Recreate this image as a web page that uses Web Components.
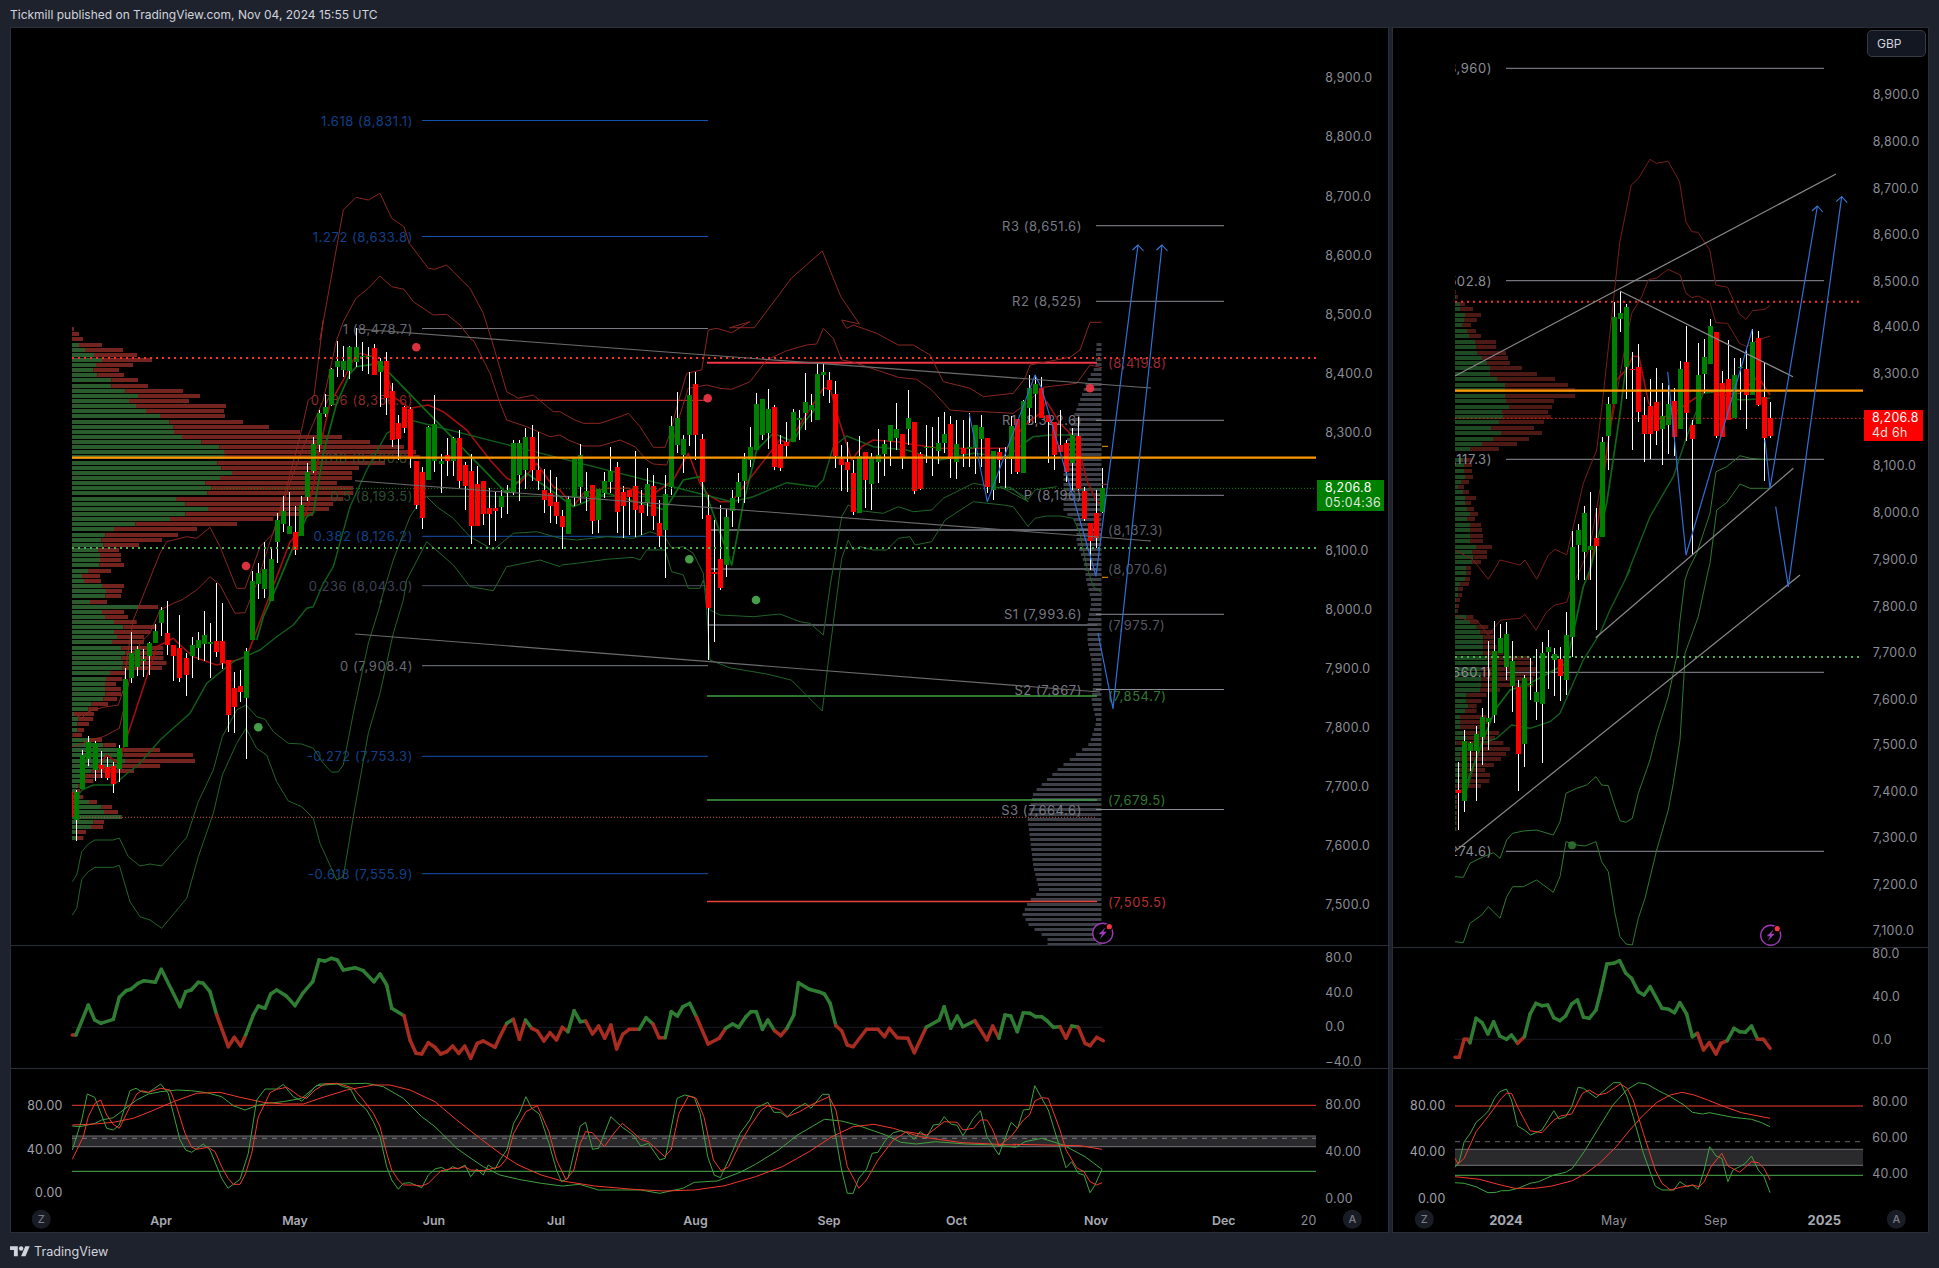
<![CDATA[<!DOCTYPE html>
<html lang="en"><head><meta charset="utf-8"><title>Tickmill chart</title>
<style>
html,body{margin:0;padding:0;background:#1e222d;}
body{width:1939px;height:1268px;overflow:hidden;display:flex;flex-direction:column;font-family:Inter,"Liberation Sans",sans-serif;}
</style></head><body>
<tv-header>Tickmill published on TradingView.com, Nov 04, 2024 15:55 UTC</tv-header>
<tv-workspace>
  <tv-panel style="--panel-w:1379px">
    <tv-pane kind="leftMain" left="11" top="28" w="1377" h="917"><tv-price-tag tone="green" price="8,206.8" sub="05:04:36" style="left:1306px;top:452px"></tv-price-tag></tv-pane>
    <tv-pane kind="leftRsi" left="11" top="946" w="1377" h="122"></tv-pane>
    <tv-pane kind="leftStoch" left="11" top="1069" w="1377" h="163" last></tv-pane>
  </tv-panel>
  <tv-panel style="--panel-w:537px">
    <tv-pane kind="rightMain" left="1393" top="28" w="535" h="919"><tv-price-tag tone="red" price="8,206.8" sub="4d 6h" style="left:471px;top:382px"></tv-price-tag><tv-badge style="left:474px;top:2px">GBP</tv-badge></tv-pane>
    <tv-pane kind="rightRsi" left="1393" top="948" w="535" h="120"></tv-pane>
    <tv-pane kind="rightStoch" left="1393" top="1069" w="535" h="163" last></tv-pane>
  </tv-panel>
</tv-workspace>
<tv-footer>TradingView</tv-footer>
<script>
const F='Inter,"Liberation Sans",sans-serif';
// zoom-crop coordinates -> page coordinates
const Z=(ox,oy,s,sx=3,sy=3)=>s.trim().split(/\s+/).map(p=>{const [x,y]=p.split(',').map(Number);return [ox+x/sx,oy+y/sy]});
const D=s=>Z(0,0,s,1568/1939,1568/1939);
const pl=(pts,c,w=1,ex='')=>`<polyline fill="none" stroke="${c}" stroke-width="${w}" stroke-linejoin="round" points="${pts.map(p=>p[0].toFixed(1)+','+p[1].toFixed(1)).join(' ')}" ${ex}/>`;
const ln=(x1,y1,x2,y2,c,w=1,ex='')=>`<line x1="${x1}" y1="${y1}" x2="${x2}" y2="${y2}" stroke="${c}" stroke-width="${w}" ${ex}/>`;
const tx=(x,y,s,c,a='start',sz=12.4,wt=400,ex='')=>`<text x="${x}" y="${y}" fill="${c}" text-anchor="${a}" dominant-baseline="central" font-size="${sz==12.8&&wt==400?13:sz}" font-weight="${wt}" letter-spacing="${sz==12.8&&wt==400?0.55:(wt==400?0.3:0)}" ${ex}>${s}</text>`;
const ci=(x,y,r,c,o=1)=>`<circle cx="${x}" cy="${y}" r="${r}" fill="${c}" opacity="${o}"/>`;
const candles=(x0,dx,oy,s,bw=5)=>{let a='',b='';s.trim().split(/\s+/).forEach((t,i)=>{const c=t[0]=='G'?'#008000':'#ff0000';const [bt,bb,wt,wb]=t.slice(1).split(',').map(v=>Math.round(oy+v/3));const x=Math.round(x0+dx*i);
 a+=`<rect x="${x}" y="${wt}" width="1" height="${wb-wt}" fill="#fff"/>`;
 b+=`<rect x="${x-2}" y="${bt}" width="${bw}" height="${Math.max(bb-bt,1)}" fill="${c}"/>`});return a+b};
const vp=(ox,oy,s,x0,gc,rc,sx=3)=>s.trim().split(/\s+/).map(t=>{const [y,g,r]=t.split('/').map(Number);const yy=Math.round(oy+y/3-2),gw=(g-x0)/sx,rw=(r-g)/sx;return `<rect x="${ox+x0/sx}" y="${yy}" width="${gw.toFixed(1)}" height="4" fill="${gc}"/><rect x="${(ox+g/sx).toFixed(1)}" y="${yy}" width="${rw.toFixed(1)}" height="4" fill="${rc}"/>`}).join('');
const rsi=(pts,zero)=>{let o='';for(let i=1;i<pts.length;i++){const a=pts[i-1],b=pts[i];const up=(a[1]+b[1])/2<zero;o+=`<line x1="${a[0].toFixed(1)}" y1="${a[1].toFixed(1)}" x2="${b[0].toFixed(1)}" y2="${b[1].toFixed(1)}" stroke="${up?'#2f7d32':'#a82c20'}" stroke-width="3.5" stroke-linecap="round"/>`}return o};
const arrow=(x,y,c='#3a78d8')=>pl([[x-5.5,y+5],[x,y],[x+5.5,y+6]],c,1.1);
const RB='#8a2720',GB='#22642a',AX='#8b8e97';
function zbtn(x,y,l){return ci(x,y,9.5,'#1a1c25')+tx(x,y,l,'#787b86','middle',11,500)}
function bolt(x,y){return `<circle cx="${x}" cy="${y}" r="10" fill="#000" stroke="#9c39b5" stroke-width="1.4"/><path d="M${x+3} ${y-6}L${x-4} ${y+1}L${x-.5} ${y+1}L${x-3} ${y+6}L${x+4} ${y-1.5}L${x+.5} ${y-1.5}Z" fill="#a13cc0"/>`+ci(x+6.6,y-6.6,3.6,'#000')+ci(x+6.6,y-6.6,2.6,'#f23645')}

const DRAW={
leftMain(){
 let o='';
 const VPL1=`27/36/42 42/36/57 58/36/69 74/57/126 90/75/189 105/102/231 120/126/276 135/108/219 150/100/177 165/112/192 181/154/234 197/154/264 213/196/369 228/234/420 243/207/387 258/228/498 273/258/492 289/300/495 305/328/549 321/340/627 336/342/720 351/366/846 366/424/930 381/478/1032 396/492/1068 412/495/1080 428/472/975 443/484/897 459/516/876 474/480/876 489/436/831 504/454/879 520/442/880 536/348/850 551/376/820 566/444/807 582/376/760 597/330/640 612/226/531 628/162/411 644/136/354 659/124/306 675/130/237 690/114/177 705/120/183 720/120/183 735/118/192 752/84/153 768/66/120 783/72/123 798/126/192 813/138/186 828/136/183`;
 const VPL2=`5/90/141 20/234/294 36/126/192 52/135/204 67/162/230 82/190/290 97/162/270 112/171/252 127/156/252 143/184/310 158/196/309 173/185/310 189/190/320 204/188/306 219/150/195 236/138/187 252/135/168 266/135/183 282/136/183 297/130/171 312/95/144 327/85/114 342/42/102 358/55/100 373/52/87 389/52/72 405/37/66 420/90/126 435/130/168 450/190/300 466/190/399 482/195/405 497/180/300 512/95/222 528/66/130 543/60/100 558/55/75 573/50/60 590/60/70 605/87/111 620/125/156 636/132/174 651/183/186 666/100/132 681/93/129 697/50/78 713/50/70`;
 o+=vp(60,320,VPL1,36,'#2a5c2e','#74241e')+vp(60,600,VPL2,36,'#2a5c2e','#74241e');
 const k=[[343,5],[365,6],[380,15],[400,22],[420,30],[440,35],[455,35],[470,38],[490,38],[510,38],[520,25],[540,25],[560,18],[580,15],[600,10],[620,14],[640,14],[660,10],[680,8],[700,10],[720,5],[742,12],[767,43],[791,68],[816,74],[866,68],[890,62],[900,73],[913,79],[923,73],[928,67],[933,60],[938,54],[945,54]];
 for(let y=343;y<946;y+=5){let i=0;while(i<k.length-2&&k[i+1][0]<y)i++;const t=(y-k[i][0])/(k[i+1][0]-k[i][0]);const w=k[i][1]+t*(k[i+1][1]-k[i][1]);o+=`<rect x="${(1101.5-w).toFixed(1)}" y="${y}" width="${w.toFixed(1)}" height="3" fill="#3e4049"/>`}
 const BL='#1552ad',BT='#10408a';
 const fib=[['1.618 (8,831.1)',120.5,BL,BT],['1.272 (8,633.8)',236.5,BL,BT],['1 (8,478.7)',328.5,'#787b86','#666973'],['0.786 (8,356.6)',400.3,'#e8362f','#8d2a26'],['0.618 (8,260.8)',457.7,'#3d5a26','#39492a'],['0.5 (8,193.5)',496.3,'#2b5b2e','#2d4f30'],['0.382 (8,126.2)',536.3,BL,BT],['0.236 (8,043.0)',585.7,'#4b4f63','#3d4156'],['0 (7,908.4)',665.7,'#787b86','#666973'],['-0.272 (7,753.3)',756.3,BL,BT],['-0.618 (7,555.9)',873.7,BL,BT]];
 fib.forEach(f=>{o+=ln(422,f[1],708,f[1],f[2])+tx(413,f[1],f[0],f[3],'end',12.8)});
 [['R3 (8,651.6)',225.7],['R2 (8,525)',301.3],['R1 (8,322.6)',420.3],['P (8,196)',495.3],['S1 (7,993.6)',614.3],['S2 (7,867)',689.5],['S3 (7,664.6)',809.5]].forEach(p=>{o+=ln(1096,p[1],1224,p[1],'#8a8d96')+tx(1082,p[1],p[0],'#777a84','end',12.8)});
 [['(8,419.8)',362.7,'#f23645','#9b2a34',2],['(8,137.3)',530,'#63666f','#5d606a',2],['(8,070.6)',569,'#55585f','#555862',2],['(7,975.7)',625,'#55585f','#555862',2],['(7,854.7)',696,'#3fa142','#2f7a33',1.6],['(7,679.5)',800,'#3fa142','#2f7a33',1.6],['(7,505.5)',901.5,'#e6433a','#b5312b',1.6]].forEach(l=>{o+=ln(707,l[1],1097,l[1],l[2],l[4])+tx(1108,l[1],l[0],l[3],'start',12.8)});
 const U1=[...Z(60,600,'37,340 65,355 85,335 130,322 175,315 190,270 205,150'),...Z(60,320,'220,900 300,700 320,665 380,650 410,655 450,622 480,680 530,805 555,805 600,680 640,640 680,500 720,350 745,240 762,228 790,0'),...Z(0,0,'960,1020 1030,630 1068,592 1105,600 1140,580 1175,655 1212,680 1228,730 1285,805 1305,808 1340,795 1410,865 1450,940'),...Z(60,320,'1295,60 1340,215 1375,235 1420,225 1480,275 1500,275'),...Z(540,320,'100,298 130,310 180,310 240,290 265,280 300,320 340,382 375,382 390,340 415,245 440,160 485,150 505,30 530,25 575,38 630,5'),...D('590,265 610,265 640,225 665,203 680,240 695,262'),...Z(540,320,'905,0 920,25 940,15 1010,40 1075,75 1120,75 1170,105 1210,185 1290,205 1330,230 1420,220 1455,175'),...Z(1000,300,'90,195 210,172 240,150 270,67 305,67')];
 const U2=[...Z(60,600,'37,440 65,432 90,420 130,410 178,385 195,310 215,200 240,130 270,100 300,30 340,10 365,0'),...Z(60,320,'380,830 410,810 450,770 480,795 525,880 555,878 590,790 625,680 700,460 730,380 790,240 830,60'),...Z(0,0,'1030,965 1068,895 1105,865 1140,828 1175,860 1212,868 1240,905 1300,945 1340,943 1380,975 1415,1020'),...Z(60,320,'1240,60 1290,160 1320,250 1340,300 1400,320 1470,350 1500,345'),...Z(540,320,'85,360 130,378 180,378 240,360 285,380 320,420 340,432 380,435 390,405 415,300 445,205 500,195 540,205 575,208 630,185 680,120 740,92 800,75 830,72 850,25 880,55 905,120 935,125 1010,150 1075,172 1130,178 1175,210 1230,270 1290,275 1330,275 1420,280 1460,250'),...Z(1000,300,'130,262 230,250 270,195 305,203')];
 const U3=[...Z(60,600,'115,500 140,465 175,490 290,140 340,115 360,135 400,170 470,195 530,180 560,170'),...Z(60,320,'690,665 715,640 740,570 760,500 780,380 810,250 850,180 880,120 900,100 940,110 980,160 1000,230 1050,265 1105,255 1150,275 1220,330 1290,420 1340,475 1380,490 1430,430 1480,500'),...Z(540,320,'60,510 100,560 130,520 200,505 265,505 330,530 400,480 445,400 480,490 505,525 540,545 575,545'),...Z(540,320,'720,360 745,370 770,330 850,205 870,205 900,310 935,420 965,380 1000,360 1070,365 1130,375 1200,385 1300,385 1400,385 1450,320 1500,280'),...Z(1000,300,'125,330 140,305 180,370 230,420 260,540 290,605 310,612')];
 const LB1=[...Z(60,600,'37,845 50,825 65,755 85,732 105,720 160,720 178,714 205,770 240,798 270,792 305,798 380,712 415,605 460,510 487,410 530,330 558,315 590,350 615,358 640,395 685,430 725,432 760,445 790,490 815,517 835,515 850,495 880,340 925,130 965,0'),...Z(60,320,'960,850 1000,720 1050,590 1080,545 1100,530 1130,560 1180,595 1230,650 1300,690 1360,640 1430,635'),...Z(540,320,'60,655 110,660 200,650 280,655 330,635 375,650 395,685 430,680 460,700 490,760 500,870 510,1020'),...D('590,540 620,545 640,550 650,560 665,575 670,534'),...Z(540,320,'905,715 925,660 940,690 960,680 1000,690 1040,690 1075,655 1110,650 1125,675 1175,665 1215,600 1300,545 1390,555 1420,560 1465,620'),...Z(1000,300,'85,678 105,655 140,648 180,648 220,655 240,700 260,800 280,860 305,878')];
 const LB2=[...Z(60,600,'37,945 50,925 65,838 85,815 105,802 160,802 178,796 210,905 240,950 270,960 305,985 380,895 415,770 460,640 487,525 530,430 558,385 590,445 620,465 650,545 685,603 725,620 760,655 780,730 830,840 850,830 880,650 925,400 960,280 1000,100 1030,0'),...Z(60,320,'1040,780 1100,665 1180,735 1230,800 1300,812 1340,740 1440,720 1500,740'),...Z(540,320,'65,735 110,730 200,718 280,712 300,720 320,690 375,690 395,755 430,765 445,805 480,805 490,780 510,870 540,885 640,890 720,882 780,905 810,910 850,945 870,800 905,590 925,555 960,572 1030,580 1075,560 1120,575 1175,570 1210,535 1300,490 1420,510 1465,545'),...Z(1000,300,'0,560 30,562 85,598 105,570 170,560')];
 const MG=[...Z(60,600,'40,610 65,570 100,555 160,555 190,530 240,490 300,420 390,340 440,250 520,185 600,150 650,110 700,75 740,25 760,20 790,-50'),...Z(60,320,'820,740 870,560 920,450 980,340 1050,300'),...Z(540,320,'575,545 640,530 740,488 830,500 850,480 880,380 920,348 1000,380 1100,390 1200,420 1300,400 1400,410 1480,350'),...Z(1000,300,'70,430 100,410 150,405 215,405')];
 const MG2=[...Z(60,320,'590,960 610,890 650,800 700,680 740,590 760,580 790,400 830,250 870,160 890,140 960,130'),...Z(60,320,'1340,520 1400,460 1500,530'),...Z(540,320,'100,560 200,520 375,570 430,480 480,470 575,735 610,550 650,390 700,340 760,365 790,310 840,250')];
 o+=pl(U1,RB)+pl(U2,RB)+pl(LB1,GB)+pl(LB2,GB)+pl(U3,'#a30e0e',1.6)+pl(MG,'#11601a',1.4)+pl(MG2,'#0c6a12',1.7);
 o+=`<rect x="72" y="792" width="1.5" height="25" fill="#f00"/>`;
 const dx=6.07;
 o+=candles(76.3,dx,600,`G575,660,570,722 G465,567,450,567 G426,476,408,497 G430,510,423,543 R495,507,453,533 R502,534,470,540 R498,552,487,578 G445,507,435,545 G237,441,205,441 G160,234,96,250 G148,200,138,228 G178,182,148,230 G130,168,125,224 G93,130,72,130 G30,68,22,108 R100,135,3,165 R135,167,135,242 R144,234,45,245 R174,225,158,287 G135,168,110,234 G120,143,97,180 G105,132,33,182 G127,131,70,233 R123,155,-50,172 R123,190,10,207 R180,345,180,395 R264,320,217,398 R258,276,210,306 G153,293,145,477 G-57,120,-87,120`);
 o+=candles(76.3+30*dx,dx,320,`G760,792,728,837 G748,808,666,835 G717,843,680,843 G600,665,578,728 G573,612,528,635 G618,641,516,641 R636,690,558,705 G556,648,528,648 G456,530,430,542 G371,454,350,458 G279,375,270,395 G262,281,222,290 G148,256,145,258 G123,141,63,170 G123,150,78,172 G81,153,78,176 G81,127,25,140 G108,112,66,152 G108,112,80,162 R84,165,72,165 G123,155,115,260 R123,234,96,284 R213,360,190,380 R310,357,285,420 R261,323,257,340 R267,414,262,445 R423,555,423,567 R456,594,440,628 G321,480,318,480 G312,423,225,456 G423,431,402,518 R405,423,355,468 G354,423,350,468 R354,483,330,505 R435,498,425,570 R453,618,402,672 R492,618,438,618 R483,582,483,615 R564,582,503,675 R564,573,516,663 G528,561,510,595 G510,518,495,582 G370,516,360,525 G370,465,360,543 G352,450,325,508 R352,450,315,483 R450,483,335,510 R510,540,447,578 R519,558,450,608 R546,587,470,613`);
 o+=candles(76.3+80*dx,dx,320,`R588,622,570,687 G537,642,527,642 G414,531,414,557 G405,501,372,548 G513,531,456,572 R495,603,495,642 G507,600,507,640 G483,519,456,533 G453,486,380,520 R441,576,426,640 R516,558,498,653 R510,531,510,645 R498,570,393,652 R555,580,510,645 G492,549,445,588 R498,588,465,630 R609,648,540,682 G522,630,465,773 G318,500,288,525 G294,376,216,400 G357,405,344,460 G225,345,156,378 R192,345,156,420 R357,486,342,597 R585,864,525,1020 R756,762,600,966 R717,804,555,810 G591,735,567,772 G534,573,510,620 G486,531,460,550 G417,483,400,550 G381,420,322,440 G252,390,220,390 G237,345,237,360 G267,339,207,387 R261,441,255,450 R372,444,345,453 R366,378,305,410 G276,366,267,366 G294,300,270,360 G246,279,158,330 G255,270,222,305 G162,300,130,300 G156,165,130,228 R180,210,155,250 R222,407,183,445 R417,435,375,513 R426,450,365,515 R459,576,420,585 G408,579,348,579 R396,480,395,565 G411,492,400,570 G405,426,327,490 G372,402,360,468 G315,363,315,438 G327,354,250,390 R342,411,342,447 G294,327,210,375 R306,513,306,522 R402,507,395,510 G380,385,315,430 G380,385,320,468 G369,393,290,432 G342,369,277,398 R312,417,288,474 G372,426,300,477 R384,402,300,440 G380,386,280,440 G315,384,315,462 G321,357,285,440 R354,501,354,520 G393,510,392,540 R396,420,384,490 G408,416,380,505 G318,417,288,462 R297,456,296,462 G243,459,240,459`);
 o+=candles(76.3+157*dx,dx,300,`G264,324,225,370 G252,282,225,370 R264,354,232,354 R345,366,345,488 R366,465,366,510 R435,456,330,456 R429,516,420,545 G405,489,385,570 R408,567,350,570 R573,657,560,662 R669,723,669,810 R639,713,570,745 G564,636,505,640`);
 o+=ln(72,358,1316,358,'#ff2a2a',2,'stroke-dasharray="2 4"');
 o+=ln(72,548,1316,548,'#4caf50',2,'stroke-dasharray="2 4"');
 o+=ln(72,457.7,1316,457.7,'#ff9800',2.2);
 o+=ln(212,488.3,1316,488.3,'#0c8a0c',1,'stroke-dasharray="1 2"');
 o+=ln(80,817.3,1096,817.3,'#c84a44',1,'stroke-dasharray="1 2"');
 o+=ln(357,329,1151,388,'#6c6c6c',1.1)+ln(355,480.7,1151,541,'#6c6c6c',1.1)+ln(355,634,1100,692,'#6c6c6c',1.1);
 o+=ln(1102,446.3,1108,446.3,'#ff9800')+ln(1102,577.3,1108,577.3,'#ff9800')+ln(1102,484.3,1108,484.3,'#a33');
 [[416.3,347.3],[246,566],[707.7,398.3],[1090,388.3]].forEach(p=>o+=ci(p[0],p[1],4.3,'#f23645',.9));
 [[258.3,727.3],[689.3,559.3],[756,600]].forEach(p=>o+=ci(p[0],p[1],4.3,'#4caf50',.9));
 const B='#2f6fd6';
 o+=pl(Z(540,320,'1288,282 1342,545 1485,165 1505,205'),B,1.1)+pl(Z(1000,300,'125,265 288,828').concat([[1138,245]]),B,1.2)+arrow(1138,245);
 o+=pl([[1098,633],[1113,708.6],[1162,245]],B,1.2)+arrow(1162,245);
 o+=bolt(1102.7,933.3);
 [[8900,77],[8800,136],[8700,196],[8600,255.5],[8500,314.5],[8400,373.5],[8300,432.5],[8100,550.5],[8000,609],[7900,668],[7800,727],[7700,786],[7600,845.5],[7500,904]].forEach(a=>{const s=String(a[0]);o+=tx(1325.3,a[1],s[0]+','+s.slice(1)+'.0',AX)});
 return o;
},
leftRsi(){
 const p=[...Z(0,940,'217,285 228,285 265,195 284,240 302,250 340,238 358,172 378,152 392,148 414,130 432,122 466,127 484,88 540,200 557,155 574,150 595,127 610,130 630,155 650,225 685,320 703,292 722,318 737,285 760,225 775,198 795,205 812,162 830,150 858,167 885,197 908,160 938,125 957,60 975,63 994,55 1012,60 1030,90 1065,83 1090,92 1122,125 1140,102 1160,135 1175,205 1212,227 1230,300 1248,340 1265,342 1285,308 1305,322 1322,342 1340,335 1358,318 1376,340 1394,318 1412,355 1432,310 1450,303 1485,322'),...Z(480,940,'52,290 70,250 87,238 103,298 119,240 135,265 150,273 167,303 183,278 200,300 215,262 230,275 246,212 262,245 276,243 294,282 310,258 326,295 342,255 357,327 373,283 390,268 416,268 434,233 452,252 468,293 484,293 500,215 516,228 530,200 548,190 566,232 596,312 625,295 642,265 660,252 676,262 695,230 708,215 722,215 738,268 752,240 770,272 786,287 802,265 820,225 832,128 860,148 885,155 900,162 915,190 930,257 945,272 960,315 975,320 1010,268 1040,268 1057,290 1070,265 1090,293 1118,295 1135,338 1166,262 1200,240 1213,200 1230,265 1247,228 1262,260 1293,242',1568/600),...Z(980,900,'21,420 38,378 57,415 75,345 92,348 112,395 130,338 150,340 167,350 185,350 202,363 220,382 240,380 258,415 275,378 295,382 315,430 330,437 350,412 370,422')];
 let o=ln(72,1027.3,1102,1027.3,'#1b1c24');
 o+=rsi(p,1027.3);
 [['80.0',957.7],['40.0',992.7],['0.0',1026.7],['−40.0',1061.7]].forEach(a=>o+=tx(1325.3,a[1],a[0],AX));
 return o;
},
leftStoch(){
 const S=1568/600;
 let o=`<rect x="72" y="1136" width="1244" height="10.7" fill="#2a2a2d"/>`;
 o+=ln(72,1136,1316,1136,'#6e6e72',1)+ln(72,1146.7,1316,1146.7,'#77777b',1)+ln(72,1138.3,1316,1138.3,'#7b7b80',1,'stroke-dasharray="5 5"');
 o+=ln(72,1105.3,1316,1105.3,'#f23a2e',1)+ln(72,1171.3,1316,1171.3,'#4caf50',1);
 const G='#3fa33f',R='#f2392c';
 const g1=[...Z(0,940,'217,630 245,540 262,462 284,472 320,565 340,570 358,555 390,452 408,445 425,455 445,458 482,432 505,460 540,600 557,630 575,637 610,612 630,630 665,715 684,745 720,718 745,640 770,480 795,447 830,447 850,433 880,470 905,483 925,465 945,440 960,432 1010,431 1030,440 1050,445 1070,482 1100,510 1120,545 1140,590 1160,680 1175,720 1195,748 1210,730 1230,728 1265,743 1285,705 1305,687 1325,682 1340,692 1358,680 1375,687 1395,675 1412,710 1430,687 1450,705 1465,675 1485,688'),...Z(480,940,'52,660 70,630 88,550 103,520 120,470 135,505 155,522 180,610 200,690 213,725 230,715 245,640 262,558 276,547 294,628 310,625 342,530 372,562 400,585 420,618 440,610 470,660 484,655 515,475 535,465 560,472 575,520 595,650 612,705 628,713 650,660 680,580 705,540 720,505 752,487 768,517 785,517 803,532 820,510 850,490 865,505 895,463 912,463 925,560 945,690 960,760 975,760 990,715 1010,688 1025,640 1040,637 1060,600 1080,578 1100,572 1115,578 1135,598 1150,575 1168,590 1185,555 1200,553 1213,530 1230,552 1247,556 1262,587 1290,535 1308,512 1325,590 1356,645 1388,547 1405,565 1420,510 1436,508 1450,437',S),...Z(980,900,'205,630 258,803 275,785 295,820 312,825 330,878 345,855 366,808')];
 const r1=[...Z(0,940,'217,658 250,590 265,530 285,490 302,480 320,525 340,553 358,565 390,500 410,462 425,452 445,457 482,445 510,450 530,500 555,580 575,622 590,628 625,622 645,635 665,680 684,715 700,733 720,733 737,700 755,640 775,530 795,490 810,458 830,448 860,442 880,455 900,470 920,475 945,450 975,432 1010,430 1040,438 1060,445 1090,480 1120,520 1140,560 1160,640 1175,690 1195,720 1210,735 1240,735 1265,738 1285,730 1305,710 1322,693 1358,685 1375,685 1394,680 1412,690 1450,692'),...Z(480,940,'52,680 70,655 88,580 120,515 150,497 180,575 200,660 225,720 245,690 262,610 276,575 294,578 325,620 350,580 372,550 395,572 420,598 440,605 483,650 500,628 520,520 545,468 565,475 585,530 610,660 630,692 650,680 680,610 705,560 735,510 752,497 785,510 803,530 835,515 865,495 912,470 930,510 960,680 990,745 1010,720 1040,660 1080,600 1115,575 1168,585 1213,545 1247,547 1262,570 1290,565 1308,540 1325,540 1340,570 1356,618 1388,590 1420,540 1436,525 1450,483',S),...Z(980,900,'185,593 205,595 240,690 258,750 290,803 312,815 330,845 350,855 366,848')];
 const g2=[...Z(0,940,'217,558 240,560 285,550 305,540 340,533 370,510 410,480 445,462 482,455 530,450 575,452 620,458 665,470 700,497 735,510 770,497 800,490 850,485 905,475 950,437 1010,432 1100,430 1150,440 1210,475 1265,530 1305,560 1370,625 1420,660 1450,680'),...Z(480,940,'52,705 100,718 160,730 215,738 260,733 310,750 370,750 420,750 470,760 530,745 560,727 620,723 680,697 720,673 780,630 830,585 900,538 945,543 985,555 1060,585 1100,607 1140,612 1190,605 1270,612 1350,615 1400,622',S),...Z(980,900,'135,725 185,715 250,735 315,770 366,808')];
 const r2=[...Z(0,940,'217,555 285,552 340,547 400,535 450,515 520,485 590,460 660,457 720,472 790,487 850,492 910,492 960,475 1040,450 1120,435 1170,435 1230,450 1305,485 1370,540 1440,595'),...Z(480,940,'52,640 100,675 160,705 215,723 300,738 400,748 480,753 560,750 640,737 720,710 790,680 860,635 920,590 975,560 1030,553 1080,565 1150,590 1260,608 1400,615',S),...Z(980,900,'100,733 300,737 366,748')];
 o+=pl(g2,G)+pl(r2,R)+pl(g1,G)+pl(r1,R);
 [['80.00',1105.7],['40.00',1149.7],['0.00',1192.7]].forEach(a=>o+=tx(62.7,a[1],a[0],'#a0a3ab','end'));
 [['80.00',1104.7],['40.00',1151.7],['0.00',1198.7]].forEach(a=>o+=tx(1325.3,a[1],a[0],AX));
 [['Apr',161],['May',295],['Jun',434],['Jul',556],['Aug',695.5],['Sep',829],['Oct',956.5],['Nov',1096],['Dec',1223.7]].forEach(a=>o+=tx(a[1],1220,a[0],'#a8abb3','middle',12.4,600));
 o+=tx(1308.7,1220,'20',AX,'middle');
 o+=zbtn(41.3,1219.3,'Z')+zbtn(1352.3,1219.3,'A');
 return o;
},
rightMain(){
 let o='';
 const VR1=`37/45/48 52/48/54 72/60/75 88/60/99 105/75/123 120/72/111 136/66/93 153/81/108 169/87/123 185/105/168 201/108/168 218/111/198 234/126/204 249/141/210 265/150/246 282/150/291 298/171/345 315/195/384 331/195/405 347/195/405 363/198/342 380/207/336 396/186/324 410/190/333 427/177/312 444/153/282 459/183/306 476/159/267 492/126/231 508/90/177 540/70/95 556/72/96 573/72/96 590/75/99 606/63/87 621/54/72 637/69/87 653/75/108 670/75/93 686/81/102 702/90/114 718/81/105 735/90/123 750/90/126 767/90/129 783/90/129 800/108/156 815/96/141 831/100/141 847/96/123 863/78/93`;
 const VR2=`10/80/93 26/75/90 42/60/87 58/55/69 75/55/66 91/48/60 107/48/57 123/50/54 140/80/100 155/90/115 170/110/145 185/120/160 200/130/165 216/130/165 232/130/170 248/130/190 264/140/270 280/145/280 296/125/290 312/125/285 328/125/280 344/125/280 360/120/180 376/80/140 392/80/125 408/85/110 424/75/110 440/60/140 456/60/150 472/60/120 488/70/178 504/80/165 520/50/190 536/80/210 552/60/198 568/60/183 584/60/162 600/60/135 616/60/150 632/60/148 648/50/123 664/50/70 680/48/52 696/48/52 712/48/51 728/48/51 744/48/50 760/48/50 776/48/50`;
 o+=vp(1440,280,VR1,45,'#1d4a23','#4d1915')+vp(1440,570,VR2,45,'#1d4a23','#4d1915');
 o+=`<clipPath id="c"><rect x="1455" y="28" width="200" height="900"/></clipPath><g clip-path="url(#c)">`;
 [['(8,960)',68.3],['(8,502.8)',280.7],['(8,117.3)',459.3],['(7,660.1)',672.3],['(7,274.6)',851.3]].forEach(l=>o+=tx(1492,l[1],l[0],'#8a8d96','end',12.8));
 o+=`</g>`;
 [68.3,280.7,459.3,672.3,851.3].forEach(y=>o+=ln(1506,y,1824,y,'#8f929b'));
 const RU1=[...Z(1440,280,'45,810 100,840 145,898 180,840 240,855 255,840 290,898 325,825 345,808 380,825 395,760 430,610 470,510 488,360'),...Z(1380,0,'655,900 672,730 705,555 725,535 757,478 775,490 808,484 840,545 858,665 875,695 892,697 925,750 942,855 975,862 1008,942 1027,958 1045,932 1080,928 1095,916',1568/559,3)];
 const RU2=[...Z(1440,570,'45,135 80,150 110,150 145,195 182,150 240,145 255,133 288,180 320,125 345,105 380,97 395,50 420,0'),...Z(1440,280,'450,800 520,400 555,200 575,100 605,50 625,0'),...Z(1380,0,'757,838 775,835 808,808 842,825 858,880 875,893 892,888 925,905 942,968 975,970 1008,1030 1030,1040 1060,1020 1095,1008',1568/559,3)];
 const RU3=Z(1440,280,'445,900 470,760 500,520 530,300 560,268 578,228 597,230 625,365 650,420 700,400 800,330 840,345 900,340 955,290 990,345');
 const RM1=[...Z(1440,570,'80,660 100,590 125,520 170,505 215,465 270,475 330,455 360,430 430,270 480,190 510,120 570,0'),...Z(1440,280,'555,900 630,710 700,590 740,470 790,340 830,335 880,355 900,360 990,355')];
 const RM2=[...Z(1440,570,'80,640 130,510 165,420 210,360 260,345 380,280 430,50 450,0'),...Z(1440,280,'500,670 540,400 560,240')];
 const RL1=[...Z(1440,570,'45,920 70,922 90,880 130,860 160,848 180,865 200,810 218,790 250,783 290,780 340,795 360,755 378,670 410,655 440,645 468,620 485,645 505,647 525,710 540,752 558,757 577,745 595,670 630,570 650,490 685,380 710,260 720,150 735,30 745,0'),...Z(1440,280,'770,820 810,700 828,575 860,560 900,527 930,535 990,540')];
 const RL2=[...Z(1440,570,'45,1115 70,1118 90,1060 125,1035 145,1010 180,1045 200,980 218,950 250,950 290,930 340,967 360,920 378,815 410,825 435,828 468,815 485,875 505,905 525,1030 540,1100 558,1122 577,1125 595,1045 615,985 650,840 685,720 700,640 720,510 733,300 735,250 775,140 805,0'),...Z(1440,280,'810,850 830,690 860,668 900,612 930,625 990,625')];
 o+=pl(RU1,'#761e1c')+pl(RU2,'#761e1c')+pl(RL1,'#2f7a30')+pl(RL2,'#2f7a30')+pl(RU3,'#a30e0e',1.6)+pl(RM1,'#11601a',1.4)+pl(RM2,'#0c6a12',1.7);
 o+=candles(1458.3,6,570,`R660,669,575,780 G513,693,480,725 G519,543,516,603 G492,543,468,693 G441,501,414,585 G444,456,213,540 G243,435,153,460 G204,249,162,250 G192,291,156,330 G273,348,213,425 R351,552,330,663 G324,522,315,590 G342,345,264,390 G366,396,237,450 G249,402,216,579 G231,246,180,357 G252,270,234,378 R267,318,231,393 G195,330,126,375 G-69,201,-117,261`);
 o+=candles(1458.3+20*6,6,280,`G750,795,732,900 G699,816,678,900 G798,810,636,900 R774,798,684,1050 G486,771,470,771 G372,468,350,570 G111,372,66,372 G99,117,33,155 G81,261,72,357 R268,270,215,510 R261,396,192,426 R405,462,352,546 R378,462,297,537 R366,453,264,495 G408,447,309,555 G372,435,315,522 R363,471,324,528 G267,447,243,447 R246,399,138,483 R435,477,420,825 G285,432,189,432 G231,282,177,340 G138,252,117,252 R156,468,156,475 R309,471,273,471 R297,420,180,420 G285,414,233,414 G260,262,235,390 R267,345,205,447 G186,345,148,345 R174,375,153,378 R351,474,245,603 R414,468,366,474`);
 o+=ln(1455,301.7,1859,301.7,'#ff2a2a',2,'stroke-dasharray="2 4"')+ln(1455,657,1859,657,'#4caf50',2,'stroke-dasharray="2 4"')+ln(1455,390.7,1863,390.7,'#ff9800',2.2)+ln(1455,418.3,1864,418.3,'#ff2020',1,'stroke-dasharray="1.5 2.5"');
 const W='#8a8a8a';
 o+=ln(1455,376,1836,174,W,1.2)+ln(1620,291,1793,376.7,W,1.2)+ln(1595.7,637.7,1793.3,468.3,W,1.2)+ln(1456.7,850,1800,575,W,1.2);
 const B='#2f6fd6';
 o+=pl([[1667.7,371.7],[1686,555],[1752.3,329.3]],B,1.2)+pl([[1765,440],[1770,488.3],[1817.4,206]],B,1.2)+arrow(1817.4,206)+pl([[1775.7,506.7],[1788.3,586.7],[1841.7,196.7]],B,1.2)+arrow(1841.7,196.7);
 o+=ci(1572,845.3,4,'#2f7a33',.85);
 o+=bolt(1770.7,935.3);
 [[8900,94],[8800,141],[8700,188],[8600,234],[8500,281],[8400,326.5],[8300,373],[8100,465],[8000,512],[7900,559],[7800,606],[7700,652],[7600,699],[7500,744],[7400,791],[7300,837],[7200,884],[7100,930]].forEach(a=>{const s=String(a[0]);o+=tx(1872.7,a[1],s[0]+','+s.slice(1)+'.0',AX)});
 return o;
},
rightRsi(){
 const p=Z(1400,940,'163,352 175,352 190,298 200,298 207,308 225,235 243,248 260,282 277,245 295,288 315,298 330,285 348,310 368,290 385,222 402,190 420,197 437,195 455,233 473,242 490,228 508,192 525,180 543,232 560,235 580,210 595,150 612,72 632,70 650,62 668,100 685,115 705,155 722,165 740,140 775,205 795,208 812,218 828,188 848,222 865,290 880,280 898,330 915,308 935,342 950,310 968,302 988,265 1005,275 1022,277 1040,258 1058,298 1075,298 1095,325',1568/530,3);
 let o=ln(1455,1039.3,1770,1039.3,'#1b1c24')+rsi(p,1039.3);
 [['80.0',953.7],['40.0',996.7],['0.0',1039.3]].forEach(a=>o+=tx(1872.3,a[1],a[0],AX));
 return o;
},
rightStoch(){
 const z=s=>Z(1400,940,s,1568/530,3);
 let o=`<rect x="1455" y="1149.3" width="408" height="16" fill="#2a2a2d"/>`;
 o+=ln(1455,1149.3,1863,1149.3,'#6e6e72')+ln(1455,1165.3,1863,1165.3,'#77777b')+ln(1455,1141.7,1863,1141.7,'#66666a',1,'stroke-dasharray="5 5"');
 o+=ln(1455,1106,1863,1106,'#f23a2e')+ln(1455,1175.3,1863,1175.3,'#4caf50');
 const G='#3fa33f',R='#f2392c';
 o+=pl(z('163,728 190,730 225,740 260,758 285,757 300,752 320,752 350,745 385,730 410,725 455,705 490,697 510,685 545,635 590,560 630,495 670,450 705,428 730,432 765,452 800,470 840,495 865,517 895,522 915,518 950,525 985,532 1040,538 1070,548 1095,560'),G);
 o+=pl(z('163,710 235,718 290,733 340,745 400,745 450,738 510,722 550,700 590,670 640,620 680,570 720,525 760,487 800,465 835,457 870,465 910,480 960,500 1010,518 1095,535'),R);
 o+=pl(z('163,682 175,665 190,605 208,580 225,547 245,530 262,512 280,475 295,455 315,447 330,480 348,558 368,570 386,585 420,570 455,512 470,537 490,530 508,500 527,442 543,445 580,473 600,455 632,428 652,428 672,470 690,530 720,640 755,738 775,750 810,750 828,725 850,740 865,735 882,748 900,690 916,620 935,648 952,655 970,725 985,690 1005,680 1022,670 1040,648 1060,690 1077,710 1095,758'),G);
 o+=pl(z('163,655 172,672 190,655 225,575 260,530 300,475 315,460 330,460 350,505 385,572 420,578 455,540 475,528 508,522 540,460 560,450 585,465 610,460 652,432 672,445 690,480 720,580 755,690 775,730 800,750 830,742 865,735 885,740 900,725 920,680 952,640 970,678 1005,697 1040,665 1060,668 1077,685 1095,720'),R);
 [['80.00',1105.7],['40.00',1151.7],['0.00',1198.7]].forEach(a=>o+=tx(1445.6,a[1],a[0],'#a0a3ab','end'));
 [['80.00',1101.7],['60.00',1137.7],['40.00',1173.3]].forEach(a=>o+=tx(1872.3,a[1],a[0],AX));
 o+=tx(1506,1220,'2024','#a8abb3','middle',13,700)+tx(1614,1220,'May','#8f929b','middle',12.4,400)+tx(1715.8,1220,'Sep','#8f929b','middle',12.4,400)+tx(1824.3,1220,'2025','#a8abb3','middle',13,700);
 o+=zbtn(1424.3,1219.3,'Z')+zbtn(1896.3,1219.3,'A');
 return o;
}};

class Base extends HTMLElement{
 constructor(){super();this.attachShadow({mode:'open'})}
}
customElements.define('tv-header',class extends Base{connectedCallback(){this.shadowRoot.innerHTML=`<style>:host{display:flex;align-items:center;height:27px;flex:none;padding:0 10px;box-sizing:border-box;color:#d1d4dc;font:400 12px/1 ${F};padding-top:3px}</style><slot></slot>`}});
customElements.define('tv-workspace',class extends Base{connectedCallback(){this.shadowRoot.innerHTML=`<style>:host{display:flex;gap:3px;height:1206px;flex:none;padding:0 10px;box-sizing:border-box}</style><slot></slot>`}});
customElements.define('tv-panel',class extends Base{connectedCallback(){this.shadowRoot.innerHTML=`<style>:host{display:flex;flex-direction:column;gap:1px;width:var(--panel-w);height:100%;box-sizing:border-box;border:1px solid #2a2e39;background:#2a2e39}</style><slot></slot>`}});
customElements.define('tv-pane',class extends Base{connectedCallback(){
 const g=n=>+this.getAttribute(n);const L=g('left'),T=g('top'),W=g('w'),H=g('h');
 this.shadowRoot.innerHTML=`<style>:host{display:block;position:relative;width:${W}px;height:${H}px;flex:none;background:#000;overflow:hidden}svg{display:block;font-family:${F}}</style><svg xmlns="http://www.w3.org/2000/svg" width="${W}" height="${H}" viewBox="${L} ${T} ${W} ${H}">${DRAW[this.getAttribute('kind')]()}</svg><slot></slot>`}});
customElements.define('tv-price-tag',class extends Base{connectedCallback(){
 const t=this.getAttribute('tone');
 this.shadowRoot.innerHTML=`<style>:host{position:absolute;display:flex;flex-direction:column;justify-content:center;gap:1px;box-sizing:border-box;height:31px;padding:0 8px;background:${t=='green'?'#008000':'#ff0000'};font:400 12.4px/14px ${F};letter-spacing:.3px;width:${t=='green'?'67px':'59px'}}span{display:block}.a{color:#fff}.b{color:#dfe6df}</style><span class="a">${this.getAttribute('price')}</span><span class="b">${this.getAttribute('sub')}</span>`}});
customElements.define('tv-badge',class extends Base{connectedCallback(){this.shadowRoot.innerHTML=`<style>:host{position:absolute;display:flex;align-items:center;box-sizing:border-box;width:59px;height:27px;padding-left:9px;border:1px solid #363a45;border-radius:5px;background:#131722;color:#d1d4dc;font:400 12px/1 ${F}}</style><slot></slot>`}});
customElements.define('tv-footer',class extends Base{connectedCallback(){this.shadowRoot.innerHTML=`<style>:host{display:flex;align-items:center;gap:4px;height:35px;flex:none;padding:3px 0 0 10px;box-sizing:border-box;color:#d1d4dc;font:400 12.6px/1 ${F}}svg{display:block}</style><svg width="20" height="15.5" viewBox="0 0 36 28"><path fill="#d1d4dc" d="M14 22H7V11H0V4h14v18zM28 22h-8l7.5-18h8L28 22z"/><circle cx="20" cy="8" r="4" fill="#d1d4dc"/></svg><slot></slot>`}});
</script>
</body></html>]]>
